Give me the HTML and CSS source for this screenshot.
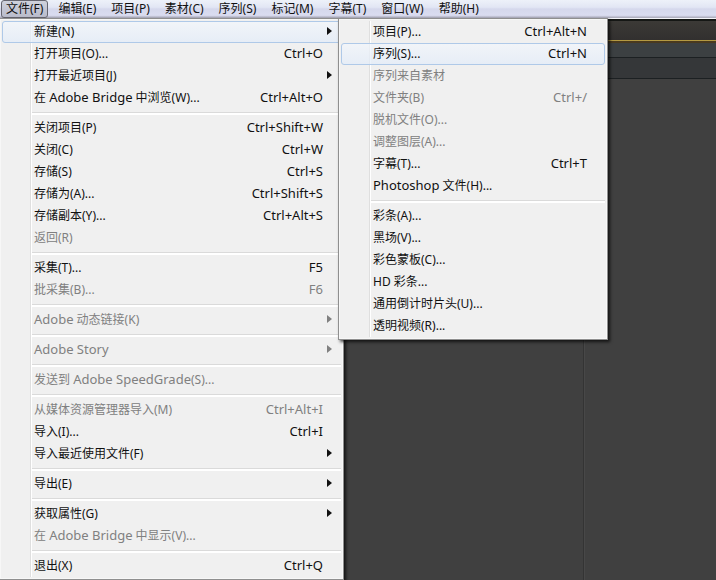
FILE: index.html
```html
<!DOCTYPE html>
<html lang="zh-CN">
  <head>
    <meta charset="UTF-8">
    <title>文件</title>
    <link rel="stylesheet" href="styles.css">
  </head>
  <body>
    <nav class="menubar">
      <button class="menubar-item open">文件(F)</button>
      <button class="menubar-item">编辑(E)</button>
      <button class="menubar-item">项目(P)</button>
      <button class="menubar-item">素材(C)</button>
      <button class="menubar-item">序列(S)</button>
      <button class="menubar-item">标记(M)</button>
      <button class="menubar-item">字幕(T)</button>
      <button class="menubar-item">窗口(W)</button>
      <button class="menubar-item">帮助(H)</button>
    </nav>

    <main class="workspace">
      <div class="toolbar"></div>
      <div class="tabs"></div>
      <div class="tabs tabs-sub"></div>
      <div class="panels">
        <div class="panel panel-main"></div>
        <div class="panel panel-side"></div>
      </div>
    </main>

    <ul class="menu menu-file">
      <li><button class="item active">新建(N)<span class="arrow"></span></button></li>
      <li><button class="item">打开项目(O)...<kbd>Ctrl+O</kbd></button></li>
      <li><button class="item">打开最近项目(J)<span class="arrow"></span></button></li>
      <li><button class="item"><span>在 <span class="latin">Adobe Bridge</span> 中浏览(W)...</span><kbd>Ctrl+Alt+O</kbd></button></li>
      <li class="separator"></li>
      <li><button class="item">关闭项目(P)<kbd>Ctrl+Shift+W</kbd></button></li>
      <li><button class="item">关闭(C)<kbd>Ctrl+W</kbd></button></li>
      <li><button class="item">存储(S)<kbd>Ctrl+S</kbd></button></li>
      <li><button class="item">存储为(A)...<kbd>Ctrl+Shift+S</kbd></button></li>
      <li><button class="item">存储副本(Y)...<kbd>Ctrl+Alt+S</kbd></button></li>
      <li><button class="item" disabled>返回(R)</button></li>
      <li class="separator"></li>
      <li><button class="item">采集(T)...<kbd>F5</kbd></button></li>
      <li><button class="item" disabled>批采集(B)...<kbd>F6</kbd></button></li>
      <li class="separator"></li>
      <li><button class="item" disabled><span><span class="latin">Adobe</span> 动态链接(K)</span><span class="arrow"></span></button></li>
      <li class="separator"></li>
      <li><button class="item" disabled><span class="latin">Adobe Story</span><span class="arrow"></span></button></li>
      <li class="separator"></li>
      <li><button class="item" disabled><span>发送到 <span class="latin">Adobe SpeedGrade</span>(S)...</span></button></li>
      <li class="separator"></li>
      <li><button class="item" disabled>从媒体资源管理器导入(M)<kbd>Ctrl+Alt+I</kbd></button></li>
      <li><button class="item">导入(I)...<kbd>Ctrl+I</kbd></button></li>
      <li><button class="item">导入最近使用文件(F)<span class="arrow"></span></button></li>
      <li class="separator"></li>
      <li><button class="item">导出(E)<span class="arrow"></span></button></li>
      <li class="separator"></li>
      <li><button class="item">获取属性(G)<span class="arrow"></span></button></li>
      <li><button class="item" disabled><span>在 <span class="latin">Adobe Bridge</span> 中显示(V)...</span></button></li>
      <li class="separator"></li>
      <li><button class="item">退出(X)<kbd>Ctrl+Q</kbd></button></li>
    </ul>

    <ul class="menu menu-new">
      <li><button class="item">项目(P)...<kbd>Ctrl+Alt+N</kbd></button></li>
      <li><button class="item active">序列(S)...<kbd>Ctrl+N</kbd></button></li>
      <li><button class="item" disabled>序列来自素材</button></li>
      <li><button class="item" disabled>文件夹(B)<kbd>Ctrl+/</kbd></button></li>
      <li><button class="item" disabled>脱机文件(O)...</button></li>
      <li><button class="item" disabled>调整图层(A)...</button></li>
      <li><button class="item">字幕(T)...<kbd>Ctrl+T</kbd></button></li>
      <li><button class="item"><span><span class="latin">Photoshop</span> 文件(H)...</span></button></li>
      <li class="separator"></li>
      <li><button class="item">彩条(A)...</button></li>
      <li><button class="item">黑场(V)...</button></li>
      <li><button class="item">彩色蒙板(C)...</button></li>
      <li><button class="item">HD 彩条...</button></li>
      <li><button class="item">通用倒计时片头(U)...</button></li>
      <li><button class="item">透明视频(R)...</button></li>
    </ul>
  </body>
</html>
```

FILE: styles.css
```css
* {
  box-sizing: border-box;
}

body {
  display: flex;
  flex-direction: column;
  min-height: 100vh;
  margin: 0;
  overflow: hidden;
  background: #404040;
  font-family: "Noto Sans", "Noto Sans CJK SC", sans-serif;
  font-size: 12px;
}

button {
  border: 0;
  background: none;
  color: #111;
  font: inherit;
  text-align: left;
  white-space: nowrap;
}

/* menu bar */
.menubar {
  display: flex;
  gap: 5px;
  height: 19px;
  padding: 0 1px;
  border-bottom: 1px solid #f4f4fa;
  background: linear-gradient(#edf1f9, #e2e6f4 40%, #d5d8ec 50%, #dadcf0 85%, #a5a5b4);
}

.menubar-item {
  height: 18px;
  padding: 0 5px;
  line-height: 18px;
}

.menubar-item.open {
  border: 1px solid #65656f;
  border-radius: 3px;
  background: linear-gradient(#cfd2dc, #b9bbcb);
  padding: 0 4px;
  line-height: 16px;
}

/* dark application area behind the menus */
.workspace {
  display: flex;
  flex: 1;
  flex-direction: column;
}

.toolbar {
  height: 24px;
  border-top: 2px solid #151715;
  border-bottom: 2px solid #49391f;
  background: linear-gradient(#3b3936, #32302f 94%, #b49a42 95%);
}

.tabs {
  height: 15px;
  border-bottom: 1px solid #1c2022;
  background: #3c4042;
}

.tabs-sub {
  height: 21px;
  background: #353739;
}

.panels {
  display: flex;
  flex: 1;
}

.panel-main {
  flex: 585;
  border-right: 1px solid #343434;
}

.panel-side {
  flex: 131;
  border-left: 1px solid #484848;
}

/* drop-down menus */
.menu {
  position: absolute;
  top: 18px;
  margin: 0;
  padding: 2px;
  border: 1px solid #8f8f8f;
  background: linear-gradient(90deg, transparent 28px, #dfdfdf 28px, #dfdfdf 29px, #fff 29px, #fff 30px, transparent 30px) content-box, #f0f0f0;
  box-shadow: inset 0 0 0 1px #f7f7f7, 2px 2px 3px rgba(0, 0, 0, 0.7);
  list-style: none;
}

.menu-file {
  left: 0;
  width: 344px;
  border-left: 0;
}

.menu-new {
  left: 338px;
  width: 270px;
}

.item {
  display: flex;
  align-items: center;
  justify-content: space-between;
  width: 100%;
  height: 22px;
  padding: 0 17px 2px 31px;
  border: 1px solid transparent;
  border-radius: 3px;
}

.item.active {
  border-color: #afc9e8;
  background: linear-gradient(rgba(242, 246, 252, 0.7), rgba(226, 236, 249, 0.7));
}

.item:disabled {
  color: #808080;
}

.item kbd,
.latin {
  font-family: inherit;
  font-size: 13px;
}

.arrow {
  width: 5px;
  height: 8px;
  margin-right: -9px;
  background: currentColor;
  clip-path: polygon(0 0, 100% 50%, 0 100%);
}

.separator {
  height: 8px;
  margin-left: 30px;
  padding-top: 3px;
}

.separator::before {
  display: block;
  height: 2px;
  border-top: 1px solid #dadada;
  background: #fff;
  content: "";
}
```
